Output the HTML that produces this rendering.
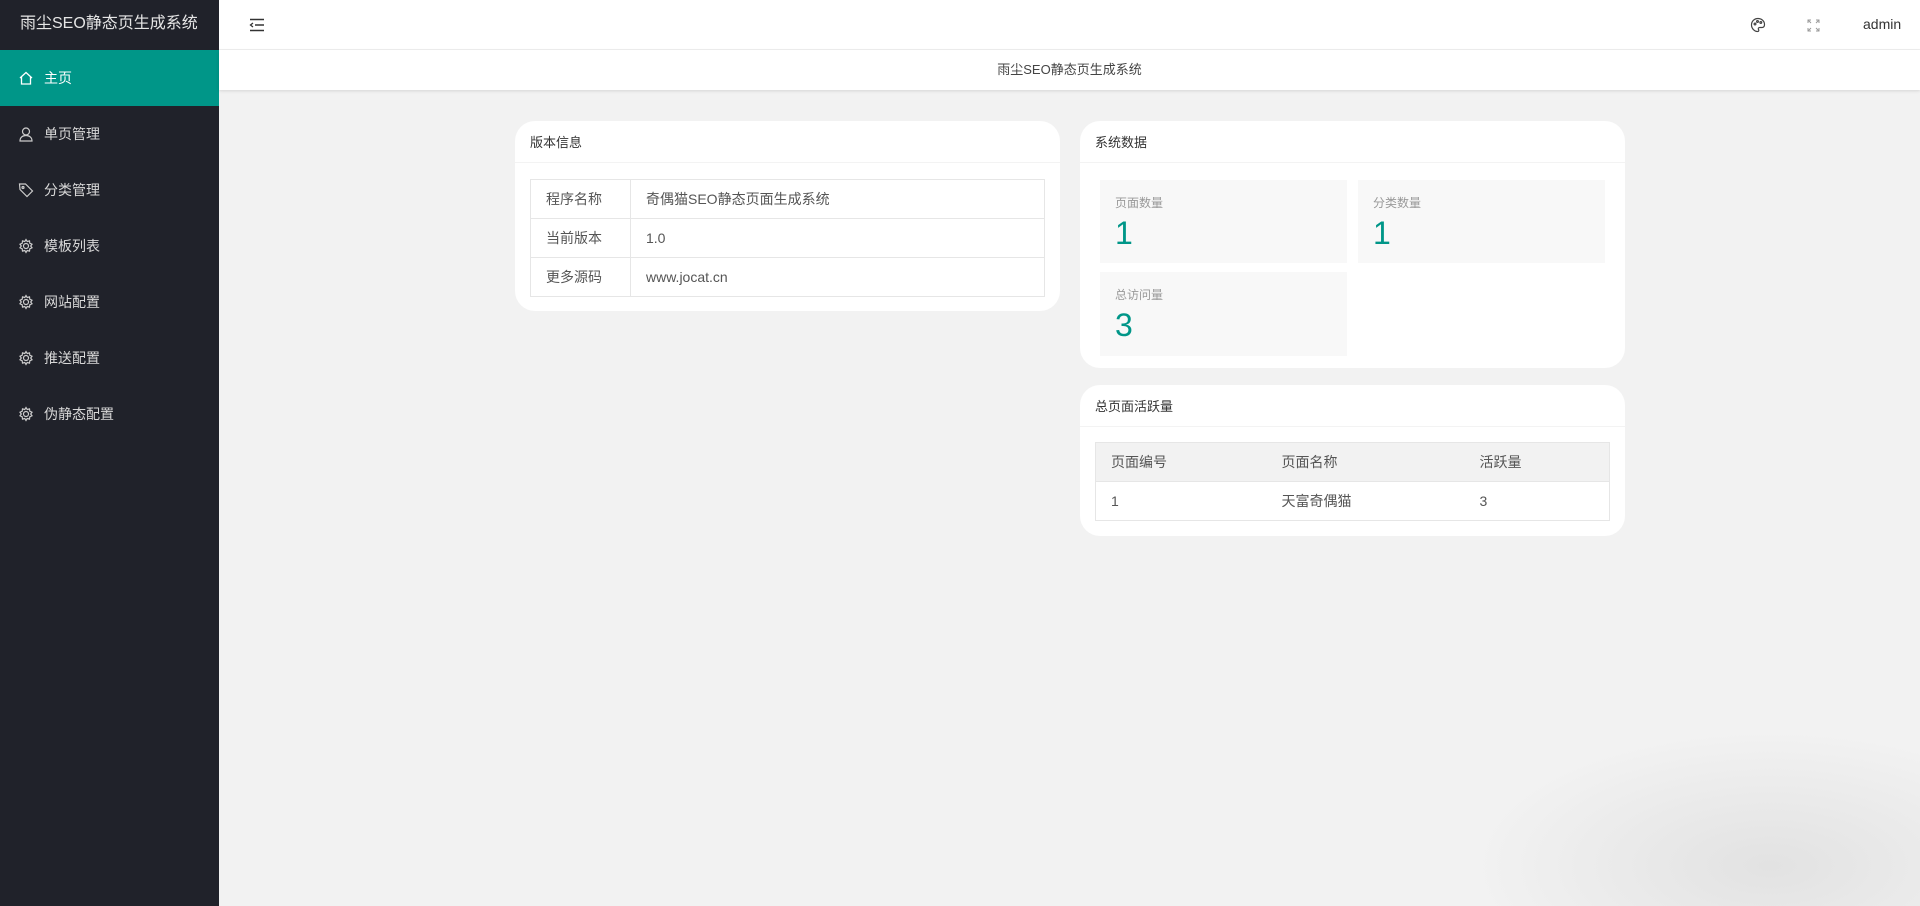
<!DOCTYPE html>
<html><head><meta charset="utf-8"><style>
*{margin:0;padding:0;box-sizing:border-box}
html,body{width:1920px;height:906px;overflow:hidden}
body{background:#f2f2f2;font-family:"Liberation Sans","Noto Sans CJK SC",sans-serif;font-size:14px;color:#333;position:relative}
.side{position:absolute;left:0;top:0;width:219px;height:906px;background:#20222a}
.logo{height:50px;line-height:48px;color:#e6e6e6;font-size:16px;padding-left:20px}
.nav{height:56px;line-height:56px;color:#d8d8d8;padding-left:44px;position:relative;font-size:14px}
.nav.on{background:#009688;color:#fff}
.nav svg{position:absolute;left:18px;top:20px}
.top{position:absolute;left:219px;top:0;right:0;height:50px;background:#fff;border-bottom:1px solid #f0f0f0}
.sub{position:absolute;left:219px;top:50px;right:0;height:40px;background:#fff;line-height:40px;text-align:center;color:#444;font-size:13px;box-shadow:0 1px 3px rgba(0,0,0,.12)}
.card{position:absolute;background:#fff;border-radius:20px;overflow:hidden}
.ch{height:42px;line-height:44px;padding-left:15px;border-bottom:1px solid #f3f3f3;color:#333;font-size:13px}
table{border-collapse:collapse;position:absolute;font-size:14px}
td,th{border:1px solid #e6e6e6;height:39px;padding-left:15px;font-weight:normal;text-align:left;color:#555}
.t2 td,.t2 th{border-left:none;border-right:none}
.t2{border-left:1px solid #e6e6e6;border-right:1px solid #e6e6e6}
.stat{position:absolute;background:#f8f8f8}
.stat .l{position:absolute;left:15px;top:14px;font-size:12px;color:#999}
.stat .n{position:absolute;left:15px;top:35px;font-size:32px;color:#009688}
</style></head><body>
<div class="side">
<div class="logo">雨尘SEO静态页生成系统</div>
<div class="nav on"><svg width="16" height="16" viewBox="0 0 16 16" fill="none" stroke="#fff" stroke-width="1.3"><path d="M2 8L8 2.5L14 8M3.5 7v7h9V7"/></svg>主页</div>
<div class="nav"><svg width="16" height="16" viewBox="0 0 16 16" fill="none" stroke="#ccc" stroke-width="1.2"><circle cx="8" cy="5.5" r="3.5"/><path d="M2 15c0-3.5 2.5-5.5 6-5.5s6 2 6 5.5z"/></svg>单页管理</div>
<div class="nav"><svg width="16" height="16" viewBox="0 0 16 16" fill="none" stroke="#ccc" stroke-width="1.2"><path d="M1.5 2h6l7 7-5.5 5.5-7-7z"/><circle cx="5" cy="5.5" r="1"/></svg>分类管理</div>
<div class="nav"><svg width="16" height="16" viewBox="0 0 16 16" fill="none" stroke="#ccc" stroke-width="1.2"><circle cx="8" cy="8" r="2.5"/><path d="M8 1.5l1.2 2 2.3-.6.3 2.3 2.2 1-1.3 1.8 1.3 1.8-2.2 1-.3 2.3-2.3-.6L8 14.5l-1.2-2-2.3.6-.3-2.3-2.2-1L3.3 8 2 6.2l2.2-1 .3-2.3 2.3.6z"/></svg>模板列表</div>
<div class="nav"><svg width="16" height="16" viewBox="0 0 16 16" fill="none" stroke="#ccc" stroke-width="1.2"><circle cx="8" cy="8" r="2.5"/><path d="M8 1.5l1.2 2 2.3-.6.3 2.3 2.2 1-1.3 1.8 1.3 1.8-2.2 1-.3 2.3-2.3-.6L8 14.5l-1.2-2-2.3.6-.3-2.3-2.2-1L3.3 8 2 6.2l2.2-1 .3-2.3 2.3.6z"/></svg>网站配置</div>
<div class="nav"><svg width="16" height="16" viewBox="0 0 16 16" fill="none" stroke="#ccc" stroke-width="1.2"><circle cx="8" cy="8" r="2.5"/><path d="M8 1.5l1.2 2 2.3-.6.3 2.3 2.2 1-1.3 1.8 1.3 1.8-2.2 1-.3 2.3-2.3-.6L8 14.5l-1.2-2-2.3.6-.3-2.3-2.2-1L3.3 8 2 6.2l2.2-1 .3-2.3 2.3.6z"/></svg>推送配置</div>
<div class="nav"><svg width="16" height="16" viewBox="0 0 16 16" fill="none" stroke="#ccc" stroke-width="1.2"><circle cx="8" cy="8" r="2.5"/><path d="M8 1.5l1.2 2 2.3-.6.3 2.3 2.2 1-1.3 1.8 1.3 1.8-2.2 1-.3 2.3-2.3-.6L8 14.5l-1.2-2-2.3.6-.3-2.3-2.2-1L3.3 8 2 6.2l2.2-1 .3-2.3 2.3.6z"/></svg>伪静态配置</div>
</div>
<div class="top">
<svg style="position:absolute;left:30px;top:18px" width="16" height="14" viewBox="0 0 16 14" stroke="#333" stroke-width="1.6"><path d="M1 1.5h14M6 7h9M1 12.5h14"/><path d="M4 5L1.5 7L4 9" fill="none" stroke-width="1.3"/></svg>
<svg style="position:absolute;left:1531px;top:17px" width="16" height="16" viewBox="0 0 16 16" fill="none" stroke="#444" stroke-width="1.2"><path d="M8 1.5C4 1.5 1.5 4.5 1.5 8c0 3.5 3 6.5 6 6.5 1.5 0 1.5-1.2 1-2-.6-1 0-2 1.2-2H12c1.5 0 2.5-1 2.5-3 0-3.5-3-6-6.5-6z"/><circle cx="5" cy="7" r=".9"/><circle cx="7.5" cy="4.5" r=".9"/><circle cx="10.8" cy="5.5" r=".9"/></svg>
<svg style="position:absolute;left:1588px;top:19px" width="13" height="13" viewBox="0 0 13 13" fill="none" stroke="#999" stroke-width="1"><path d="M1 4V1h3M1 1l3 3M12 4V1H9M12 1L9 4M1 9v3h3M1 12l3-3M12 9v3H9M12 12L9 9"/></svg>
<div style="position:absolute;left:1644px;top:16px;font-size:14px;color:#333">admin</div>
</div>
<div class="sub">雨尘SEO静态页生成系统</div>

<div class="card" style="left:515px;top:121px;width:545px;height:190px">
<div class="ch">版本信息</div>
<table style="left:15px;top:58px;width:515px">
<tr><td style="width:100px">程序名称</td><td>奇偶猫SEO静态页面生成系统</td></tr>
<tr><td>当前版本</td><td>1.0</td></tr>
<tr><td>更多源码</td><td>www.jocat.cn</td></tr>
</table>
</div>

<div class="card" style="left:1080px;top:121px;width:545px;height:247px">
<div class="ch">系统数据</div>
<div class="stat" style="left:20px;top:59px;width:247px;height:83px"><div class="l">页面数量</div><div class="n">1</div></div>
<div class="stat" style="left:278px;top:59px;width:247px;height:83px"><div class="l">分类数量</div><div class="n">1</div></div>
<div class="stat" style="left:20px;top:151px;width:247px;height:84px"><div class="l">总访问量</div><div class="n">3</div></div>
</div>

<div class="card" style="left:1080px;top:385px;width:545px;height:151px">
<div class="ch">总页面活跃量</div>
<table class="t2" style="left:15px;top:57px;width:515px">
<tr style="background:#f2f2f2"><th style="width:171px">页面编号</th><th style="width:198px">页面名称</th><th>活跃量</th></tr>
<tr><td>1</td><td>天富奇偶猫</td><td>3</td></tr>
</table>
</div>
<div style="position:absolute;left:1420px;top:706px;width:500px;height:200px;background:radial-gradient(ellipse at 70% 80%,rgba(222,222,222,.8),rgba(242,242,242,0) 60%)"></div>
</body></html>
